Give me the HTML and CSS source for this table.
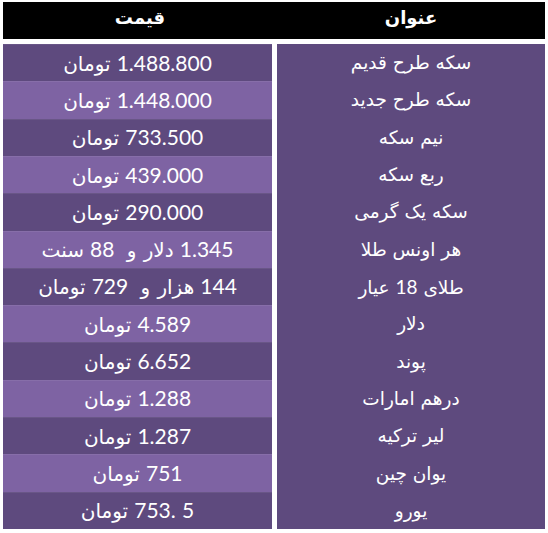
FILE: index.html
```
<!DOCTYPE html>
<html lang="fa">
<head>
<meta charset="utf-8">
<link rel="stylesheet" href="styles.css">
</head>
<body>
<div class="sheet" dir="rtl">
  <div class="head">
    <div class="hcell">عنوان</div>
    <div class="hcell">قیمت</div>
  </div>
  <div class="rows">
    <div class="t"><span class="txt">سکه طرح قدیم</span></div><div class="p d"><span class="txt"><span class="n">1.488.800</span> <span class="f">تومان</span></span></div>
    <div class="t"><span class="txt">سکه طرح جدید</span></div><div class="p l"><span class="txt"><span class="n">1.448.000</span> <span class="f">تومان</span></span></div>
    <div class="t"><span class="txt">نیم سکه</span></div><div class="p d"><span class="txt"><span class="n">733.500</span> <span class="f">تومان</span></span></div>
    <div class="t"><span class="txt">ربع سکه</span></div><div class="p l"><span class="txt"><span class="n">439.000</span> <span class="f">تومان</span></span></div>
    <div class="t"><span class="txt">سکه یک گرمی</span></div><div class="p d"><span class="txt"><span class="n">290.000</span> <span class="f">تومان</span></span></div>
    <div class="t"><span class="txt">هر اونس طلا</span></div><div class="p l"><span class="txt"><span class="n">1.345</span> <span class="f">دلار و</span>  <span class="n">88</span> <span class="f">سنت</span></span></div>
    <div class="t"><span class="txt">طلای <span class="n2">18</span> عیار</span></div><div class="p d"><span class="txt"><span class="n">144</span> <span class="f">هزار و</span>  <span class="n">729</span> <span class="f">تومان</span></span></div>
    <div class="t"><span class="txt">دلار</span></div><div class="p l"><span class="txt"><span class="n">4.589</span> <span class="f">تومان</span></span></div>
    <div class="t"><span class="txt">پوند</span></div><div class="p d"><span class="txt"><span class="n">6.652</span> <span class="f">تومان</span></span></div>
    <div class="t"><span class="txt">درهم امارات</span></div><div class="p l"><span class="txt"><span class="n">1.288</span> <span class="f">تومان</span></span></div>
    <div class="t"><span class="txt">لیر ترکیه</span></div><div class="p d"><span class="txt"><span class="n">1.287</span> <span class="f">تومان</span></span></div>
    <div class="t"><span class="txt">یوان چین</span></div><div class="p l"><span class="txt"><span class="n">751</span> <span class="f">تومان</span></span></div>
    <div class="t"><span class="txt">یورو</span></div><div class="p d"><span class="txt"><span class="n">5 .753</span> <span class="f">تومان</span></span></div>
  </div>
</div>
</body>
</html>
```
FILE: styles.css
```
html, body {
  margin: 0;
  padding: 0;
  background: #ffffff;
}

.sheet {
  padding: 2px 3px 0 3px;
  width: 542px;
  font-family: "DejaVu Sans", sans-serif;
  color: #ffffff;
}

.head {
  display: grid;
  grid-template-columns: 268px 274px;
  height: 37px;
  background: #000000;
}

.hcell {
  text-align: center;
  font-weight: bold;
  font-size: 18px;
  line-height: 32px;
}

.rows {
  margin-top: 5px;
  display: grid;
  grid-template-columns: 268px 269px;
  column-gap: 5px;
  grid-template-rows: repeat(13, 1fr);
  height: 485px;
}

.t, .p {
  display: flex;
  align-items: center;
  justify-content: center;
}

.txt {
  white-space: pre;
}

.t {
  background: #5e4a7e;
  font-size: 18.5px;
}

.p.d {
  background: #5e4a7e;
}

.p.l {
  background: #7e63a3;
}

.p {
  box-shadow: inset 0 1px 0 rgba(255, 255, 255, 0.07);
  word-spacing: 1px;
}

.n {
  font-family: Lato, "Open Sans", sans-serif;
  font-size: 21px;
}

.n2 {
  font-family: Lato, "Open Sans", sans-serif;
  font-size: 19px;
}

.f {
  font-family: "DejaVu Sans", sans-serif;
  font-size: 20px;
}
```
